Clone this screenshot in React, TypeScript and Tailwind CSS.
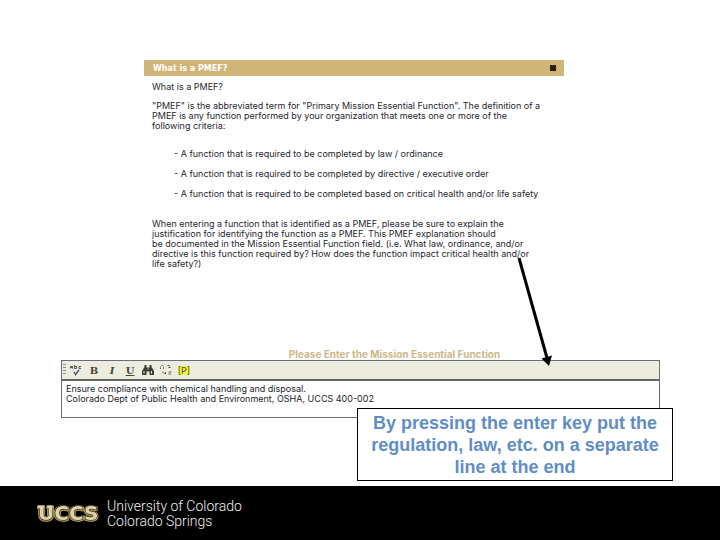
import React from 'react';

const criteria = [
  '- A function that is required to be completed by law / ordinance',
  '- A function that is required to be completed by directive / executive order',
  '- A function that is required to be completed based on critical health and/or life safety',
];

const SpellCheckIcon = () => (
  <svg className="w-3 h-3" viewBox="0 0 12 12" fill="none" stroke="#55564a" strokeWidth="1">
    <path d="M.5 4.500V2.500h2v2M1 3.500h1M4.500 1v3.500h2v-2h-2M11 2.500H9v2h2" />
    <path d="M4 8l1.500 2.500L9 6" stroke="#4a4f78" strokeWidth="1.400" />
  </svg>
);

const FindIcon = () => (
  <svg className="w-3 h-3" viewBox="0 0 12 12" fill="#3c3d33">
    <path d="M2.500 1h2v2.500h3V1h2v2L12 7v4H7.500V7.500h-3V11H0V7l2.500-4z" />
    <path d="M1.500 7h1v2.500h-1zM9 7h1v2.500H9zM5.500 4.500h1v1h-1z" fill="#ecedde" />
  </svg>
);

const ReplaceIcon = () => (
  <svg className="w-3 h-3" viewBox="0 0 12 12" fill="none" stroke="#55564a">
    <path d="M.5 5V2.500L2 1l1.500 1.500V5" strokeDasharray="1.500 1" />
    <path d="M7.500 1.500h2v2.500M8.500 3.500h2" strokeDasharray="2 1" />
    <path d="M2.500 7.500l1 2h2M5.500 8v3" strokeDasharray="2 1" />
    <path d="M9 11V7.500h2V9H9.500l1.500 2" stroke="#96978a" />
  </svg>
);

const Logo = () => (
  <svg className="w-[68px] h-7" viewBox="0 0 68 28" role="img" aria-label="UCCS">
    <g
      className="font-['DejaVu_Sans',sans-serif] text-[20px] font-bold [paint-order:stroke] [filter:drop-shadow(1px_0_0_#a08d58)_drop-shadow(-1px_0_0_#a08d58)_drop-shadow(0_1px_0_#a08d58)]"
      fill="#ded2a8"
      stroke="#1a160b"
      strokeWidth="1"
    >
      <text x="3" y="21">UCCS</text>
      <path d="M3 6.400h6v2.600H3zM12.500 6.400h5v2.600h-5z" stroke="none" />
    </g>
  </svg>
);

interface ToolButtonProps {
  label: string;
  children: React.ReactNode;
}

const ToolButton: React.FC<ToolButtonProps> = ({ label, children }) => (
  <button type="button" aria-label={label} className="w-[18px] h-[18px] flex items-center justify-center">
    {children}
  </button>
);

const HelpDialog = () => (
  <section className="max-w-[420px] text-[9px] leading-[10px] text-[#26262e]">
    <header className="h-4 pt-1 pb-[2px] pl-[9px] pr-[7px] flex items-center justify-between bg-[#cfb577]">
      <h1 className="font-['DejaVu_Sans',sans-serif] text-[8px] font-bold text-white">What is a PMEF?</h1>
      <button type="button" aria-label="Close">
        <svg className="w-2 h-2" viewBox="0 0 8 8">
          <path d="M1 0h6v6H1z" fill="#231c10" />
          <path d="M1 2.500v1M7 2.500v1M3.500 0h1M3.500 6h1" stroke="#8a774a" />
        </svg>
      </button>
    </header>
    <div className="pl-2 pt-[6px]">
      <p>What is a PMEF?</p>
      <p className="mt-[9px]">
        "PMEF" is the abbreviated term for "Primary Mission Essential Function". The definition of a
        <br />
        PMEF is any function performed by your organization that meets one or more of the
        <br />
        following criteria:
      </p>
      <ul className="mt-[18px] pl-[22px] space-y-[10px] whitespace-nowrap">
        {criteria.map((item) => (
          <li key={item}>{item}</li>
        ))}
      </ul>
      <p className="mt-5">
        When entering a function that is identified as a PMEF, please be sure to explain the
        <br />
        justification for identifying the function as a PMEF. This PMEF explanation should
        <br />
        be documented in the Mission Essential Function field. (i.e. What law, ordinance, and/or
        <br />
        directive is this function required by? How does the function impact critical health and/or
        <br />
        life safety?)
      </p>
    </div>
  </section>
);

const FunctionEditor = () => (
  <section>
    <label htmlFor="mission-function" className="block pl-[68px] text-center text-[10px] leading-3 font-bold text-[#cdb88a]">
      Please Enter the Mission Essential Function
    </label>
    <div className="border border-[#6c6d6c]">
      <div className="h-5 flex items-center bg-[#ecedde] border-b-2 border-[#666762] text-[#45463b]">
        <svg className="w-[5px] h-3" viewBox="0 0 5 12" stroke="#8f9084">
          <path d="M1 .5h3M1 3.500h3M1 6.500h3M1 9.500h3" />
        </svg>
        <ToolButton label="Check spelling"><SpellCheckIcon /></ToolButton>
        <ToolButton label="Bold"><b className="font-['DejaVu_Serif'] text-[10px]">B</b></ToolButton>
        <ToolButton label="Italic"><b className="font-['DejaVu_Serif'] text-[10px] italic">I</b></ToolButton>
        <ToolButton label="Underline"><b className="font-['DejaVu_Serif'] text-[10px] underline">U</b></ToolButton>
        <ToolButton label="Find"><FindIcon /></ToolButton>
        <ToolButton label="Replace"><ReplaceIcon /></ToolButton>
        <ToolButton label="Paragraph"><span className="bg-[#f5f53a] text-[9px] leading-[9px]">[P]</span></ToolButton>
      </div>
      <textarea
        id="mission-function"
        rows={3}
        className="block w-full resize-none overflow-hidden px-1 py-[3px] text-[9px] leading-[10px] text-[#1c1c28]"
        defaultValue={'Ensure compliance with chemical handling and disposal.\nColorado Dept of Public Health and Environment, OSHA, UCCS 400-002'}
      />
    </div>
  </section>
);

const App: React.FC = () => (
  <div className="min-h-screen flex flex-col bg-white font-['Inter',sans-serif]">
    <main className="relative pt-[60px] pl-[61px] pr-[60px]">
      <div className="pl-[83px]">
        <HelpDialog />
      </div>
      <div className="mt-[79px]">
        <FunctionEditor />
      </div>
      <svg className="absolute left-[510px] top-[250px] w-[50px] h-[120px]" viewBox="0 0 50 120">
        <path d="M9 8L37 108" stroke="#000" strokeWidth="3" />
        <path d="M31.500 108.500L42 105.500L39 116z" fill="#000" />
      </svg>
      <aside className="relative ml-auto -mr-[13px] -mt-[10px] w-[316px] border border-black bg-white pt-[3px] pb-[2px] text-center font-['Liberation_Sans',sans-serif] text-lg leading-[22px] font-bold text-[#5f8dc6]">
        By pressing the enter key put the
        <br />
        regulation, law, etc. on a separate
        <br />
        line at the end
      </aside>
    </main>
    <footer className="mt-[5px] flex-1 min-h-[54px] bg-black flex items-center pl-[35px] gap-1">
      <Logo />
      <p className="pt-px font-['Roboto',sans-serif] text-sm leading-[15px] font-light text-[#f0f0f0]">
        University of Colorado
        <br />
        Colorado Springs
      </p>
    </footer>
  </div>
);

export default App;
